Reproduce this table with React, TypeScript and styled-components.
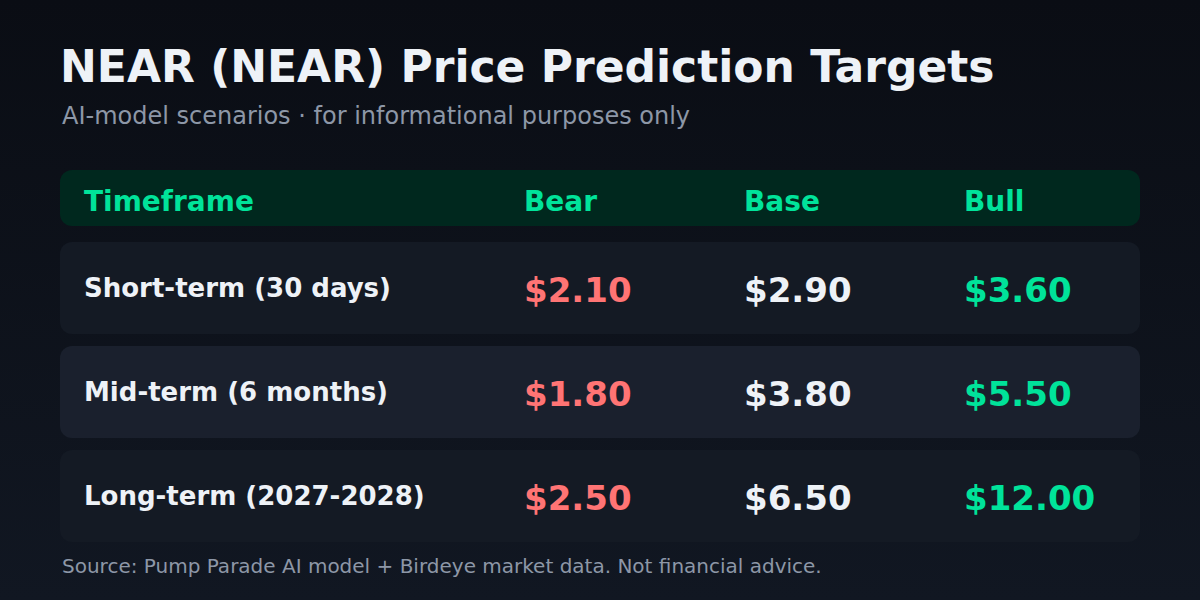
import React from 'react';
import styled, { createGlobalStyle } from 'styled-components';

const GlobalStyle = createGlobalStyle`
  html, body {
    margin: 0;
    padding: 0;
  }
  body {
    font-family: 'DejaVu Sans', Verdana, sans-serif;
  }
`;

const Page = styled.div`
  width: 1200px;
  height: 600px;
  box-sizing: border-box;
  padding: 40px 60px 0;
  background: linear-gradient(180deg, #0a0d14 0%, #111722 100%);
  color: #eef2f7;
  display: flex;
  flex-direction: column;
`;

const Title = styled.h1`
  margin: 0;
  font-size: 44px;
  font-weight: 700;
  line-height: 54px;
  color: #eef2f7;
`;

const Subtitle = styled.div`
  margin: 8px 0 0 2px;
  font-size: 24px;
  line-height: 28px;
  color: #8d97a7;
`;

const Table = styled.div`
  margin-top: 40px;
  display: flex;
  flex-direction: column;
  gap: 12px;
`;

const Row = styled.div<{ $head?: boolean; $alt?: boolean }>`
  display: grid;
  grid-template-columns: 440px 220px 220px 1fr;
  align-items: center;
  height: ${(p) => (p.$head ? 56 : 92)}px;
  padding: 0 24px;
  border-radius: 12px;
  background: ${(p) => (p.$head ? '#00281e' : p.$alt ? '#1a202d' : '#141a24')};
  margin-bottom: ${(p) => (p.$head ? 4 : 0)}px;
`;

const HeadCell = styled.div`
  font-size: 28px;
  font-weight: 700;
  line-height: 32px;
  padding-top: 7px;
  color: #00e39a;
`;

const Label = styled.div`
  font-size: 26px;
  font-weight: 700;
  color: #eef2f7;
`;

const Price = styled.div<{ $tone: 'bear' | 'base' | 'bull' }>`
  font-size: 34px;
  font-weight: 700;
  padding-top: 4px;
  color: ${(p) => (p.$tone === 'bear' ? '#ff7474' : p.$tone === 'bull' ? '#00e39a' : '#eef2f7')};
`;

const Footer = styled.div`
  margin: 12px 0 0 2px;
  font-size: 20px;
  color: #8d97a7;
`;

const rows = [
  { label: 'Short-term (30 days)', bear: '$2.10', base: '$2.90', bull: '$3.60' },
  { label: 'Mid-term (6 months)', bear: '$1.80', base: '$3.80', bull: '$5.50' },
  { label: 'Long-term (2027-2028)', bear: '$2.50', base: '$6.50', bull: '$12.00' },
];

export default function App() {
  return (
    <>
      <GlobalStyle />
      <Page>
        <Title>NEAR (NEAR) Price Prediction Targets</Title>
        <Subtitle>AI-model scenarios · for informational purposes only</Subtitle>
        <Table>
          <Row $head>
            <HeadCell>Timeframe</HeadCell>
            <HeadCell>Bear</HeadCell>
            <HeadCell>Base</HeadCell>
            <HeadCell>Bull</HeadCell>
          </Row>
          {rows.map((r, i) => (
            <Row key={r.label} $alt={i === 1}>
              <Label>{r.label}</Label>
              <Price $tone="bear">{r.bear}</Price>
              <Price $tone="base">{r.base}</Price>
              <Price $tone="bull">{r.bull}</Price>
            </Row>
          ))}
        </Table>
        <Footer>Source: Pump Parade AI model + Birdeye market data. Not financial advice.</Footer>
      </Page>
    </>
  );
}
